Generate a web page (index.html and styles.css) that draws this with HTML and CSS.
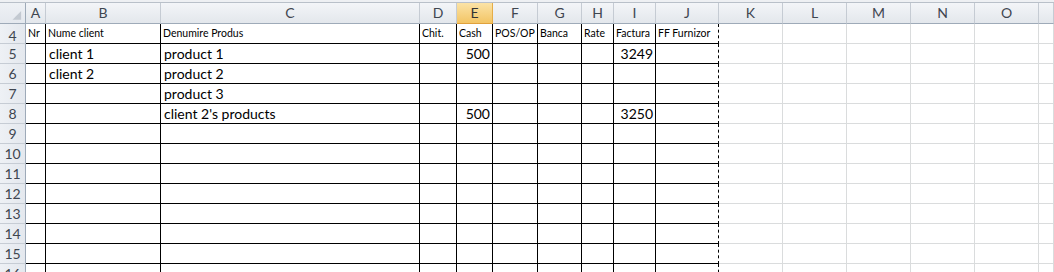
FILE: index.html
```html
<!DOCTYPE html>
<html>
<head>
  <title>Book1 - Sheet1</title>
  <link rel="stylesheet" href="styles.css">
</head>
<body>
  <div class="sheet">
    <!-- strip above the column letters -->
    <div class="top-strip"></div>

    <!-- column letters -->
    <div class="row col-heads">
      <div class="corner">
        <svg width="26" height="20" viewBox="0 0 26 20"><polygon points="22,8 22,17 13,17" fill="#c3c9d1"/></svg>
      </div>
      <div>A</div><div>B</div><div>C</div><div>D</div><div class="active">E</div><div>F</div><div>G</div><div>H</div><div>I</div><div>J</div><div>K</div><div>L</div><div>M</div><div>N</div><div>O</div><div></div>
    </div>

    <!-- table labels -->
    <div class="row labels">
      <div class="rh">4</div><div>Nr</div><div>Nume client</div><div>Denumire Produs</div><div>Chit.</div><div>Cash</div><div>POS/OP</div><div>Banca</div><div>Rate</div><div>Factura</div><div>FF Furnizor</div><div></div><div></div><div></div><div></div><div></div><div></div>
    </div>

    <!-- data -->
    <div class="row">
      <div class="rh">5</div><div></div><div>client 1</div><div>product 1</div><div></div><div class="num">500</div><div></div><div></div><div></div><div class="num">3249</div><div></div><div></div><div></div><div></div><div></div><div></div><div></div>
    </div>
    <div class="row">
      <div class="rh">6</div><div></div><div>client 2</div><div>product 2</div><div></div><div></div><div></div><div></div><div></div><div></div><div></div><div></div><div></div><div></div><div></div><div></div><div></div>
    </div>
    <div class="row">
      <div class="rh">7</div><div></div><div></div><div>product 3</div><div></div><div></div><div></div><div></div><div></div><div></div><div></div><div></div><div></div><div></div><div></div><div></div><div></div>
    </div>
    <div class="row">
      <div class="rh">8</div><div></div><div></div><div>client 2's products</div><div></div><div class="num">500</div><div></div><div></div><div></div><div class="num">3250</div><div></div><div></div><div></div><div></div><div></div><div></div><div></div>
    </div>

    <!-- empty rows -->
    <div class="row"><div class="rh">9</div><div></div><div></div><div></div><div></div><div></div><div></div><div></div><div></div><div></div><div></div><div></div><div></div><div></div><div></div><div></div><div></div></div>
    <div class="row"><div class="rh">10</div><div></div><div></div><div></div><div></div><div></div><div></div><div></div><div></div><div></div><div></div><div></div><div></div><div></div><div></div><div></div><div></div></div>
    <div class="row"><div class="rh">11</div><div></div><div></div><div></div><div></div><div></div><div></div><div></div><div></div><div></div><div></div><div></div><div></div><div></div><div></div><div></div><div></div></div>
    <div class="row"><div class="rh">12</div><div></div><div></div><div></div><div></div><div></div><div></div><div></div><div></div><div></div><div></div><div></div><div></div><div></div><div></div><div></div><div></div></div>
    <div class="row"><div class="rh">13</div><div></div><div></div><div></div><div></div><div></div><div></div><div></div><div></div><div></div><div></div><div></div><div></div><div></div><div></div><div></div><div></div></div>
    <div class="row"><div class="rh">14</div><div></div><div></div><div></div><div></div><div></div><div></div><div></div><div></div><div></div><div></div><div></div><div></div><div></div><div></div><div></div><div></div></div>
    <div class="row"><div class="rh">15</div><div></div><div></div><div></div><div></div><div></div><div></div><div></div><div></div><div></div><div></div><div></div><div></div><div></div><div></div><div></div><div></div></div>
    <div class="row"><div class="rh">16</div><div></div><div></div><div></div><div></div><div></div><div></div><div></div><div></div><div></div><div></div><div></div><div></div><div></div><div></div><div></div><div></div></div>
  </div>
</body>
</html>
```

FILE: styles.css
```css
body {
  margin: 0;
  background-color: #ffffff;
  overflow: hidden;
  font-family: Lato, "Liberation Sans", sans-serif;
  color: #000000;
}

.sheet {
  width: 1054px;
  height: 272px;
  overflow: hidden;
}

.top-strip {
  height: 2px;
  background-color: #eef0f3;
  border-bottom: 1px solid #b9c0c9;
}

/* Every row shares the same column widths (right border included) */
.row {
  display: grid;
  grid-template-columns: 26px 20px 115px 259px 37px 36px 45px 44px 32px 42px 63px 64px 64px 64px 64px 64px 1fr;
  height: 20px;
}

.row > div {
  box-sizing: border-box;
  height: 20px;
  display: flex;
  align-items: flex-end;
  padding: 0 3px 1px 3px;
  font-size: 14px;
  line-height: 16px;
  white-space: nowrap;
  overflow: hidden;
}

/* Columns A..I have black borders */
.row > div:nth-child(n+2):nth-child(-n+10) {
  border-right: 1px solid #000000;
  border-bottom: 1px solid #000000;
}

/* Column J: page break line on the right */
.row > div:nth-child(11) {
  border-right: 1px dashed #000000;
  border-bottom: 1px solid #000000;
}

/* Columns K.. : plain gridlines */
.row > div:nth-child(n+12) {
  border-right: 1px solid #dadcdd;
  border-bottom: 1px solid #dadcdd;
}

.row > .num {
  justify-content: flex-end;
  padding-right: 2px;
}

/* Row numbers */
.row > .rh {
  justify-content: center;
  padding: 0 0 1px 0;
  background: linear-gradient(to right, #eef1f5, #e4e8ee);
  border-right: 1px solid #9eaab8;
  border-bottom: 1px solid #c6ccd4;
  color: #3f4650;
  font-size: 14px;
}

/* Column letters */
.col-heads {
  height: 21px;
}

.col-heads > div {
  height: 21px !important;
  justify-content: center;
  align-items: center !important;
  padding: 0 !important;
  background: linear-gradient(#f3f5f8, #e3e7ec);
  border-right: 1px solid #c5cbd3 !important;
  border-bottom: 1px solid #9eaab8 !important;
  color: #3f4650;
  font-size: 14px;
}

.col-heads > .active {
  background: linear-gradient(#fbe3a6, #f3c565);
  border-right-color: #e5ad48 !important;
  border-bottom-color: #e0a13c !important;
  color: #333333;
}

.col-heads > .corner {
  align-items: stretch !important;
  justify-content: flex-start;
  background: linear-gradient(#eef1f5, #e4e8ee);
  border-right: 1px solid #9eaab8 !important;
}

/* Row 4: small caption labels */
.labels > div {
  font-size: 10.5px;
  line-height: 12px;
  padding: 0 2px 4px 2px;
}

.labels > .rh {
  padding-bottom: 1px;
}
```
